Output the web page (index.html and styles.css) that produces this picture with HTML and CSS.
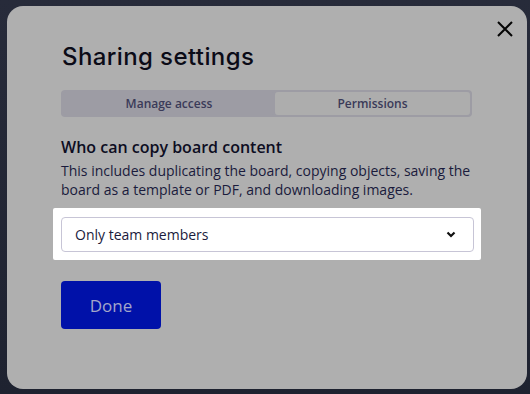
FILE: index.html
```html
<!DOCTYPE html>
<html lang="en">
<head>
  <meta charset="UTF-8" />
  <title>Sharing settings</title>
  <link rel="stylesheet" href="styles.css">
</head>
<body>
  <div class="modal">
    <button class="close-btn" aria-label="Close">
      <svg width="18" height="18" viewBox="0 0 18 18">
        <path d="M2 2 L16 16 M16 2 L2 16" stroke="#050505" stroke-width="2" fill="none" />
      </svg>
    </button>

    <h1 class="title">Sharing settings</h1>

    <div class="tabs">
      <div class="tab active">Manage access</div>
      <div class="tab">Permissions</div>
    </div>

    <h3 class="section-title">Who can copy board content</h3>
    <p class="section-text">This includes duplicating the board, copying objects, saving the board as a template or PDF, and downloading images.</p>

    <div class="highlight">
      <div class="select">
        <span>Only team members</span>
        <svg width="10" height="7" viewBox="0 0 10 7">
          <path d="M1.5 1.5 L5 5 L8.5 1.5" stroke="#111" stroke-width="2.2" fill="none" />
        </svg>
      </div>
    </div>

    <button class="done-btn">Done</button>
  </div>
</body>
</html>
```

FILE: styles.css
```css
* {
  box-sizing: border-box;
  margin: 0;
  padding: 0;
}

body {
  font-family: 'Open Sans', 'Noto Sans', sans-serif;
  background: linear-gradient(#272b3a, #1e2230);
  width: 530px;
  height: 394px;
  overflow: hidden;
  padding: 6px 0 0 7px;
}

.modal {
  position: relative;
  width: 520px;
  height: 383px;
  background-color: #afafaf;
  border-radius: 16px;
  padding: 35px 55px 0 54px;
}

.close-btn {
  position: absolute;
  top: 14px;
  right: 13px;
  background: none;
  border: none;
  width: 18px;
  height: 18px;
  cursor: pointer;
}

.title {
  font-family: 'Inter', Lato, sans-serif;
  font-weight: 500;
  font-size: 24px;
  line-height: 32px;
  color: #0b0b17;
  letter-spacing: 0.4px;
  margin-bottom: 17px;
  padding-left: 1px;
}

.tabs {
  display: flex;
  height: 27px;
  background-color: #9d9ca4;
  border-radius: 4px;
  padding: 2px;
}

.tab {
  display: flex;
  align-items: center;
  justify-content: center;
  font-size: 12px;
  font-weight: 600;
  color: #3a3a58;
  border-radius: 3px;
}

.tab.active {
  width: 212px;
  background-color: #9d9ca4;
}

.tab:not(.active) {
  flex: 1;
  background-color: #adadad;
}

.section-title {
  font-size: 16px;
  font-weight: 600;
  color: #0d0d22;
  margin-top: 19px;
  line-height: 22px;
}

.section-text {
  font-size: 14px;
  line-height: 19px;
  color: #1a1b3c;
  margin-top: 3px;
}

.highlight {
  background-color: #ffffff;
  margin: 9px -9px 0 -8px;
  padding: 9px 7px 8px 8px;
  border-radius: 2px;
}

.select {
  height: 35px;
  border: 1px solid #c7c5d6;
  border-radius: 4px;
  display: flex;
  align-items: center;
  justify-content: space-between;
  padding: 0 17px 0 13px;
  font-size: 14px;
  color: #1a1b3c;
}

.done-btn {
  margin-top: 21px;
  width: 100px;
  height: 48px;
  background-color: #0011a9;
  border: none;
  border-radius: 4px;
  color: #a3a6c9;
  font-family: 'Open Sans', sans-serif;
  font-size: 17px;
}
```
